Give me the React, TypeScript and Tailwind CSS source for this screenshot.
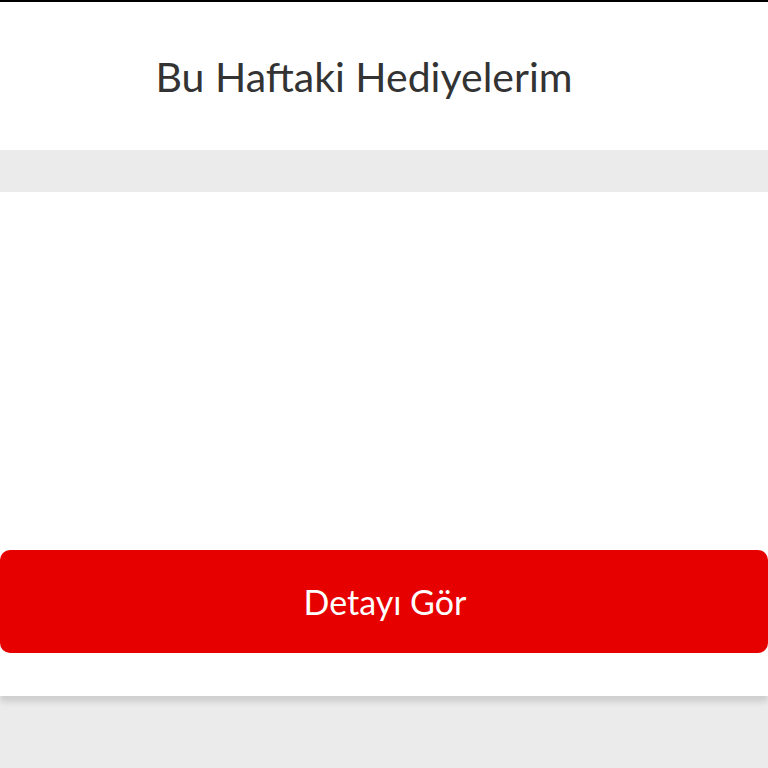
export default function App() {
  return (
    <div className="min-h-[768px] bg-[#ebebeb] font-['Lato',sans-serif]">
      <div className="h-[2px] bg-black" />
      <div className="flex h-[148px] items-start justify-center bg-white pt-[51px]">
        <h1 className="text-[41px] leading-[48px] text-[#333333] pr-[40px]">Bu Haftaki Hediyelerim</h1>
      </div>
      <div className="h-[42px]" />
      <div className="flex h-[504px] flex-col justify-end bg-white pb-[43px] shadow-[0_6px_6px_rgba(0,0,0,0.12)]">
        <button className="flex h-[103px] w-full items-center justify-center rounded-[10px] bg-[#e60000] pl-[2px] text-[34px] text-white">
          Detayı Gör
        </button>
      </div>
    </div>
  )
}
